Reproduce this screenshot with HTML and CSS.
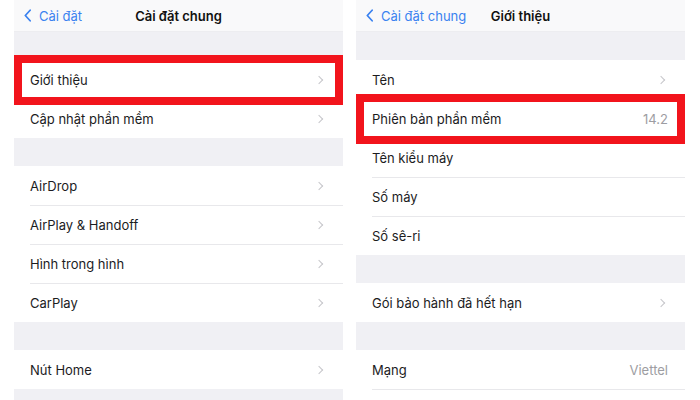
FILE: index.html
```html
<!DOCTYPE html>
<html lang="vi">
<head>
<meta charset="utf-8">
<link rel="stylesheet" href="styles.css">
</head>
<body>
<div class="page">
  <section class="panel">
    <header class="nav">
      <span class="back"><svg class="back-chev" viewBox="0 0 8 14" width="7" height="13"><path d="M7 1L1.5 7L7 13" fill="none" stroke="currentColor" stroke-width="2" stroke-linecap="round" stroke-linejoin="round"/></svg>Cài đặt</span>
      <span class="title">Cài đặt chung</span>
    </header>
    <div class="gap gap-top"></div>
    <div class="group">
      <div class="row highlighted"><span class="label">Giới thiệu</span><span class="chev"></span></div>
      <div class="row"><span class="label">Cập nhật phần mềm</span><span class="chev"></span></div>
    </div>
    <div class="gap"></div>
    <div class="group">
      <div class="row"><span class="label">AirDrop</span><span class="chev"></span></div>
      <div class="row"><span class="label">AirPlay &amp; Handoff</span><span class="chev"></span></div>
      <div class="row"><span class="label">Hình trong hình</span><span class="chev"></span></div>
      <div class="row"><span class="label">CarPlay</span><span class="chev"></span></div>
    </div>
    <div class="gap"></div>
    <div class="group">
      <div class="row"><span class="label">Nút Home</span><span class="chev"></span></div>
    </div>
    <div class="gap gap-fill"></div>
  </section>

  <section class="panel">
    <header class="nav">
      <span class="back"><svg class="back-chev" viewBox="0 0 8 14" width="7" height="13"><path d="M7 1L1.5 7L7 13" fill="none" stroke="currentColor" stroke-width="2" stroke-linecap="round" stroke-linejoin="round"/></svg>Cài đặt chung</span>
      <span class="title">Giới thiệu</span>
    </header>
    <div class="gap gap-top"></div>
    <div class="group">
      <div class="row"><span class="label">Tên</span><span class="chev"></span></div>
      <div class="row highlighted"><span class="label">Phiên bản phần mềm</span><span class="value">14.2</span></div>
      <div class="row"><span class="label">Tên kiểu máy</span></div>
      <div class="row"><span class="label">Số máy</span></div>
      <div class="row"><span class="label">Số sê-ri</span></div>
    </div>
    <div class="gap"></div>
    <div class="group">
      <div class="row"><span class="label">Gói bảo hành đã hết hạn</span><span class="chev"></span></div>
    </div>
    <div class="gap"></div>
    <div class="group">
      <div class="row"><span class="label">Mạng</span><span class="value">Viettel</span></div>
      <div class="row"><span class="label"></span></div>
    </div>
  </section>
</div>
</body>
</html>
```

FILE: styles.css
```css
* { box-sizing: border-box; }
html, body { margin: 0; padding: 0; background: #ffffff; }
body {
  font-family: Inter, "Noto Sans", "Liberation Sans", sans-serif;
  color: #1c1c1e;
  width: 700px;
  height: 400px;
  overflow: hidden;
}
.page {
  display: flex;
  gap: 13px;
  padding-left: 14px;
  height: 400px;
}
.panel {
  width: 329px;
  display: flex;
  flex-direction: column;
  background: #f0f0f4;
  overflow: hidden;
}
.nav {
  position: relative;
  height: 32px;
  flex: none;
  background: #f9f9fa;
  border-bottom: 1px solid #ededf0;
  display: flex;
  align-items: center;
  justify-content: center;
  font-size: 13px;
}
.title {
  font-weight: 600;
  color: #111;
}
.back {
  position: absolute;
  left: 10px;
  top: 0;
  height: 31px;
  display: flex;
  align-items: center;
  gap: 8px;
  color: #3a82f0;
  font-size: 13px;
}
.back-chev { display: block; }
.gap { height: 28px; flex: none; }
.gap-top { height: 28px; }
.gap-fill { flex: 1; }
.group { background: #ffffff; flex: none; }
.row {
  position: relative;
  height: 39px;
  display: flex;
  align-items: center;
  padding: 0 17px 0 16px;
  font-size: 13px;
}
.row + .row::before {
  content: "";
  position: absolute;
  top: 0;
  left: 16px;
  right: 0;
  height: 1px;
  background: #e8e8eb;
}
.label { flex: 1; }
.value { color: #9d9da2; }
.chev {
  width: 6px;
  height: 6px;
  border-top: 1.3px solid #c6c6ca;
  border-right: 1.3px solid #c6c6ca;
  transform: rotate(45deg);
  margin-right: 4px;
}
.highlighted::after {
  content: "";
  position: absolute;
  left: 0;
  right: 0;
  top: -5px;
  bottom: -6px;
  border: 8px solid #f2141c;
  z-index: 2;
}
```
